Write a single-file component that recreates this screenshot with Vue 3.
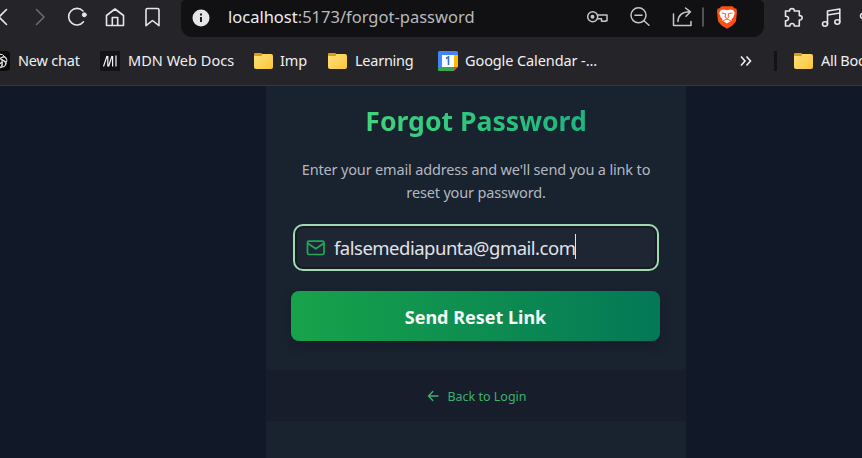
<script setup>
const folders = ['Imp', 'Learning']
</script>

<template>
  <div class="window">
    <header class="chrome">
      <div class="toolbar">
        <svg class="nav" width="181" height="37" viewBox="0 0 181 37" fill="none" stroke="#e6e6ea" stroke-width="1.6" stroke-linecap="round" stroke-linejoin="round">
          <path d="M6.500 9.500L-1 17l7.500 7.500" />
          <path d="M36.500 9.500L44 17l-7.500 7.500" stroke="#6b6b70" />
          <path d="M83.500 21.800A8.300 8.300 0 1 1 83 11" />
          <circle cx="84.300" cy="14.800" r="2" fill="#e6e6ea" stroke-width="1" />
          <path d="M106.500 15.500L115 9l8.500 6.500V25.500h-17zM112.300 25v-7.500h5.400V25" />
          <path d="M147.500 8.500h10q1.500 0 1.500 1.500v15.700l-6.500-5.200-6.500 5.200V10q0-1.500 1.500-1.500z" />
        </svg>
        <div class="address">
          <svg class="info" width="18" height="18" viewBox="0 0 18 18">
            <circle cx="9" cy="9" r="8.500" fill="#e4e4e9" />
            <path d="M9 8v5M9 4.600v1.800" stroke="#111113" stroke-width="1.900" />
          </svg>
          <span class="url"><b>localhost</b>:5173/forgot-password</span>
          <svg class="actions" width="184" height="37" viewBox="580 0 184 37" fill="none" stroke="#c5c5ca" stroke-width="1.500" stroke-linejoin="round" stroke-linecap="round">
            <circle cx="592.700" cy="16.800" r="5" />
            <circle cx="592.500" cy="16.800" r="1.200" fill="#c5c5ca" />
            <path d="M597.500 15h9.500v5.800h-1.200v.5h-4.300v-2.500h-4" />
            <circle cx="638.500" cy="15.300" r="7.500" />
            <path d="M635 15.300h7M644 20.800l5 4.500" />
            <path d="M673.500 14v11.500H691v-4M678 21.500c0-6 4-9.800 12-9.800M685.500 8l5 3.800-4.500 4.500" />
            <path d="M703 8v18" stroke="#68686d" />
            <path d="M721.500 6.300h11l2 2 2 .5.500 3-1 9.500-3.500 4.200-5.500 3.300-5.500-3.300-3.500-4.200-1-9.500.5-3 2-.5z" fill="#fb4f14" stroke="none" />
            <path d="M721 10l3-.5 3 .8 3-.8 3 .5 1.800 3-1.600 4.500-1.700 1.500.3 1.500-4.800 3-4.800-3 .3-1.500-1.700-1.500-1.600-4.500z" fill="#fff" stroke="none" />
            <path d="M722 13l3.300.8M732 13l-3.300.8M725.800 13.800l-.8 3.500 2 1.200 2-1.200-.8-3.500M723.500 20.500l3.500-1.500 3.500 1.500" stroke="#fb4f14" stroke-width=".9" />
          </svg>
        </div>
        <svg class="tools" width="98" height="37" viewBox="764 0 98 37" fill="none" stroke="#e6e6ea" stroke-width="1.600" stroke-linejoin="round" stroke-linecap="round">
          <path d="M785.500 11h4.200c-.8-3.200 5.400-3.200 4.600 0h5v4.700c3.800-.7 3.800 5 0 4.300V26h-5c.6-3.400-5-3.400-4.400 0h-4.400v-5.300c4 .6 4-5 0-4.400z" />
          <ellipse cx="825" cy="24" rx="2.500" ry="2.200" />
          <ellipse cx="837.300" cy="22" rx="2.500" ry="2.200" />
          <path d="M827.500 24V11l12.300-2v13M827.500 15l12.300-2" />
          <circle cx="863" cy="16" r="2.500" />
        </svg>
      </div>

      <nav class="bookmarks">
        <div class="bm chat">
          <svg width="20" height="20" viewBox="0 0 20 20" fill="none" stroke="#e0e0e0" stroke-width="1">
            <rect width="20" height="20" rx="4" fill="#09090a" stroke="none" />
            <path v-for="n in 6" :key="n" d="M8 12V6.500a3.200 3.200 0 0 1 6-1.500M10 7.500l3.800-2.200a3 3 0 0 1 2.500 2.500" :transform="`rotate(${n * 60} 10 10)`" />
          </svg>
          <span>New chat</span>
        </div>
        <div class="bm mdn">
          <svg width="20" height="20" viewBox="0 0 20 20">
            <rect width="20" height="20" fill="#121217" />
            <path d="M3.500 15.500L7 5M7.800 5v10.500M8.500 15.500L12 5M12.600 5v10.500M16 4.500v11" stroke="#f4f4f4" stroke-width="1.200" fill="none" />
          </svg>
          <span>MDN Web Docs</span>
        </div>
        <div v-for="name in folders" :key="name" class="bm" :class="name.toLowerCase()">
          <i class="folder"></i>
          <span>{{ name }}</span>
        </div>
        <div class="bm calendar">
          <svg width="20" height="20" viewBox="0 0 20 20">
            <rect width="20" height="20" rx="1.500" fill="#4285f4" />
            <path d="M16 4h4v12h-4z" fill="#fbbc04" />
            <path d="M0 16h16v4H1.500Q0 20 0 18.500z" fill="#34a853" />
            <path d="M16 16h4l-4 4z" fill="#ea4335" />
            <path d="M20 16v4h-4z" fill="#252529" />
            <path d="M4 4h12v12H4z" fill="#fff" />
            <path d="M8 7.500L10.500 6v8" stroke="#2f70d8" stroke-width="1.600" fill="none" />
          </svg>
          <span>Google Calendar -...</span>
        </div>
        <svg class="more" width="14" height="12" viewBox="0 0 14 12" fill="none" stroke="#f0f0f0" stroke-width="1.600"><path d="M2 1.500L6 6l-4 4.500M7.500 1.500l4 4.500-4 4.500" /></svg>
        <i class="divider"></i>
        <div class="bm all">
          <i class="folder"></i>
          <span>All Bookmarks</span>
        </div>
      </nav>
    </header>

    <main class="page">
      <section class="card">
        <h1>Forgot Password</h1>
        <p class="lead">Enter your email address and we'll send you a link to<br>reset your password.</p>
        <div class="field">
          <svg width="20" height="16" viewBox="0 0 20 16" fill="none" stroke="#20a957" stroke-width="1.700" stroke-linejoin="round" stroke-linecap="round">
            <rect x="1.500" y="1.200" width="16.500" height="13.300" rx="1.500" />
            <path d="M2 3.500l7.800 5.300L17.500 3.500" />
          </svg>
          <span class="email">falsemediapunta@gmail.com</span>
          <i class="caret"></i>
        </div>
        <button class="submit"><span>Send Reset Link</span></button>
        <div class="footer">
          <svg width="12" height="12" viewBox="0 0 12 12" fill="none" stroke="#3bb36d" stroke-width="1.400" stroke-linecap="round" stroke-linejoin="round"><path d="M11 6H1.500M5.800 1.500L1.500 6l4.300 4.500" /></svg>
          <span>Back to Login</span>
        </div>
      </section>
    </main>
  </div>
</template>

<style>
body { margin: 0; overflow: hidden; }
</style>

<style scoped>
* { box-sizing: border-box; }
.window { width: 862px; height: 458px; overflow: hidden; display: flex; flex-direction: column; background: #111827; font-family: "Noto Sans", "Open Sans", sans-serif; }
svg, i { display: block; flex: none; }
span { white-space: nowrap; }
.chrome { height: 86px; flex: none; background: #252529; border-bottom: 1px solid #37373a; }
.toolbar { display: flex; height: 37px; }
.address { width: 583px; height: 37px; flex: none; background: #111113; border-radius: 5px 5px 11px 11px; display: flex; align-items: center; padding-left: 11px; }
.info { margin-top: -2px; }
.url { margin-left: 18px; width: 352px; font-size: 16.500px; line-height: 24px; color: #b9b9bf; margin-top: -4px; }
.url b { font-weight: 400; color: #ececf0; }
.bookmarks { display: flex; height: 48px; align-items: center; }
.bm { display: flex; align-items: center; flex: none; font-size: 14.500px; color: #f0f0f2; letter-spacing: -.1px; }
.bm span { line-height: 20px; padding-bottom: 2px; }
.chat { margin-left: -10px; gap: 8px; width: 110px; letter-spacing: -.2px; }
.mdn { gap: 8px; width: 154px; letter-spacing: .03px; }
.imp { gap: 7px; width: 74px; }
.learning { gap: 8px; width: 110px; letter-spacing: -.25px; }
.calendar { gap: 7px; width: 301px; }
.folder { width: 19px; height: 15px; border-radius: 2px; background: linear-gradient(135deg, #ffe07a, #fbc638); position: relative; }
.folder::before { content: ""; position: absolute; left: 0; top: -1px; width: 8px; height: 3px; border-radius: 1px; background: #dc9c13; }
.more { margin-right: 21px; }
.divider { width: 3px; height: 20px; background: #131315; border-radius: 1px; margin-right: 17px; }
.all { gap: 8px; letter-spacing: -.3px; }
.page { flex: 1; background: #111827; padding-left: 266px; }
.card { width: 420px; height: 372px; background: #19222f; display: flex; flex-direction: column; align-items: center; }
h1 { margin: 16px 0 0; font-size: 26.600px; line-height: 38px; font-weight: 700; white-space: nowrap; background: linear-gradient(90deg, #40d47d, #1db57f); background-clip: text; -webkit-background-clip: text; color: transparent; }
.lead { margin: 18px 0 0; text-align: center; font-size: 14.500px; line-height: 23px; color: #b3b8c0; letter-spacing: -.16px; white-space: nowrap; }
.field { width: 366px; height: 47px; margin-top: 20px; border: 2px solid #9edbb1; border-radius: 10px; background: #1e2533; box-shadow: inset 0 0 0 2px #171a21; display: flex; align-items: center; padding-left: 11px; }
.email { margin-left: 8px; font-size: 18.500px; line-height: 26px; color: #e1e3e6; letter-spacing: -.5px; }
.caret { width: 1px; height: 25px; background: #e1e3e6; margin-top: -2px; }
.submit { width: 369px; height: 50px; margin: 20px 1px 0 0; border: 0; border-radius: 8px; background: linear-gradient(90deg, #17a34a, #047857); box-shadow: 0 6px 10px #181d2a; font: 700 18px/24px "Noto Sans", sans-serif; color: #f5faf7; padding: 1px 0 0; }
.footer { width: 420px; height: 51px; margin-top: 29px; background: #171d2b; display: flex; align-items: center; justify-content: center; gap: 8px; color: #3bb36d; font-size: 12.500px; padding-left: 2px; }
.footer span { padding-top: 2px; }
</style>
